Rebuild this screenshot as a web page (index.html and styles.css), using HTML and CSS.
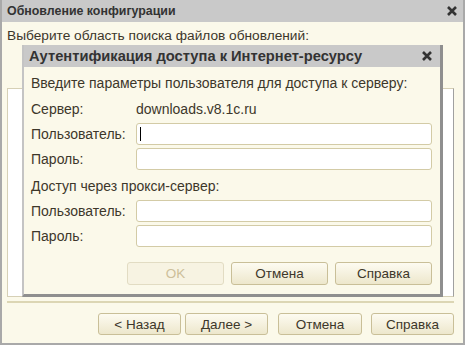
FILE: index.html
```html
<!DOCTYPE html>
<html lang="ru">
<head>
    <meta charset="UTF-8">
    <title>Обновление конфигурации</title>
    <link rel="stylesheet" href="styles.css">
</head>
<body>
    <div class="window">
        <div class="titlebar">
            <span class="title">Обновление конфигурации</span>
            <svg class="close" width="12" height="12" viewBox="0 0 12 12"><path d="M2 2 L10 10 M10 2 L2 10" stroke="#333" stroke-width="2.6"/></svg>
        </div>
        <div class="window-body">
            <div class="prompt">Выберите область поиска файлов обновлений:</div>
            <div class="area"></div>
            <div class="separator"></div>
            <div class="buttons">
                <div class="btn btn-nav">&lt; Назад</div>
                <div class="btn btn-nav">Далее &gt;</div>
                <div class="btn btn-wide">Отмена</div>
                <div class="btn">Справка</div>
            </div>
        </div>

        <!-- окно аутентификации поверх мастера -->
        <div class="dialog">
            <div class="titlebar dialog-title">
                <span class="title">Аутентификация доступа к Интернет-ресурсу</span>
                <svg class="close" width="12" height="12" viewBox="0 0 12 12"><path d="M2 2 L10 10 M10 2 L2 10" stroke="#333" stroke-width="2.6"/></svg>
            </div>
            <div class="dialog-body">
                <div class="intro">Введите параметры пользователя для доступа к серверу:</div>
                <div class="row row-server">
                    <span class="label">Сервер:</span>
                    <span class="value">downloads.v8.1c.ru</span>
                </div>
                <div class="row row-first">
                    <span class="label">Пользователь:</span>
                    <div class="field"><span class="caret"></span></div>
                </div>
                <div class="row">
                    <span class="label">Пароль:</span>
                    <div class="field"></div>
                </div>
                <div class="section">Доступ через прокси-сервер:</div>
                <div class="row row-first">
                    <span class="label">Пользователь:</span>
                    <div class="field"></div>
                </div>
                <div class="row">
                    <span class="label">Пароль:</span>
                    <div class="field"></div>
                </div>
                <div class="dialog-buttons">
                    <div class="btn btn-dlg btn-disabled">OK</div>
                    <div class="btn btn-dlg">Отмена</div>
                    <div class="btn btn-dlg">Справка</div>
                </div>
            </div>
        </div>
    </div>
</body>
</html>
```

FILE: styles.css
```css
body {
    margin: 0;
    font-family: "Liberation Sans", Arial, sans-serif;
    font-size: 14px;
    color: #3d372a;
    background-color: #fbf9ea;
}

.window {
    position: relative;
    width: 465px;
    height: 345px;
    box-sizing: border-box;
    border: 2px solid #a9a9a9;
    border-top: none;
    background-color: #fbf9ea;
    overflow: hidden;
}

.titlebar {
    display: flex;
    align-items: center;
    justify-content: space-between;
    height: 22px;
    padding: 0 5px 0 5px;
    background-color: #c9c9c9;
}

.title {
    font-weight: bold;
    font-size: 12.4px;
    color: #333;
}

.close {
    display: block;
}

.window-body {
    padding: 7px 9px 0 5px;
}

.prompt {
    font-size: 13.7px;
    line-height: 14px;
}

.area {
    height: 207px;
    margin-top: 45px;
    background-color: #fff;
    border: 1px solid #d6d0b6;
    border-right-color: #a0a0a0;
}

.separator {
    height: 2px;
    margin-top: 4px;
    background-color: #dcd6b4;
}

.buttons {
    display: flex;
    justify-content: flex-end;
    gap: 4px;
    margin-top: 10px;
}

.btn {
    width: 83px;
    height: 22px;
    box-sizing: border-box;
    display: flex;
    align-items: center;
    justify-content: center;
    font-size: 13.5px;
    border: 1px solid #c9bf98;
    border-radius: 3px;
    background: linear-gradient(#fdfbf1, #ede7cc);
    color: #3d372a;
}

.btn-wide {
    margin-left: 6px;
    margin-right: 5px;
    width: 84px;
}

.dialog {
    position: absolute;
    left: 20px;
    top: 45px;
    width: 421px;
    height: 252px;
    box-sizing: border-box;
    border-left: 2px solid #c4c4c4;
    border-right: 3px solid #8f8f8f;
    border-bottom: 3px solid #8f8f8f;
    background-color: #fbf9ea;
}

.dialog-title {
    padding: 0 7px 0 5px;
}

.dialog-title .title {
    font-size: 14.7px;
}

.dialog-body {
    padding: 8px 8px 0 7px;
}

.intro {
    line-height: 16px;
}

.row {
    display: flex;
    align-items: center;
    margin-top: 3px;
}

.row-server {
    margin-top: 10px;
    height: 16px;
}

.row-first {
    margin-top: 6px;
}

.label {
    width: 105px;
    flex-shrink: 0;
}

.field {
    position: relative;
    flex: 1;
    height: 22px;
    box-sizing: border-box;
    background-color: #fff;
    border: 1px solid #d3cba6;
    border-radius: 3px;
}

.caret {
    position: absolute;
    left: 3px;
    top: 3px;
    width: 1px;
    height: 14px;
    background-color: #000;
}

.section {
    line-height: 16px;
    margin-top: 8px;
}

.dialog-buttons {
    display: flex;
    justify-content: flex-end;
    gap: 7px;
    margin-top: 15px;
}

.btn-dlg {
    width: 97px;
    height: 23px;
}

.btn-disabled {
    color: #cdbf9a;
    border-color: #e2dcc3;
    background: #f7f3e2;
}
```
